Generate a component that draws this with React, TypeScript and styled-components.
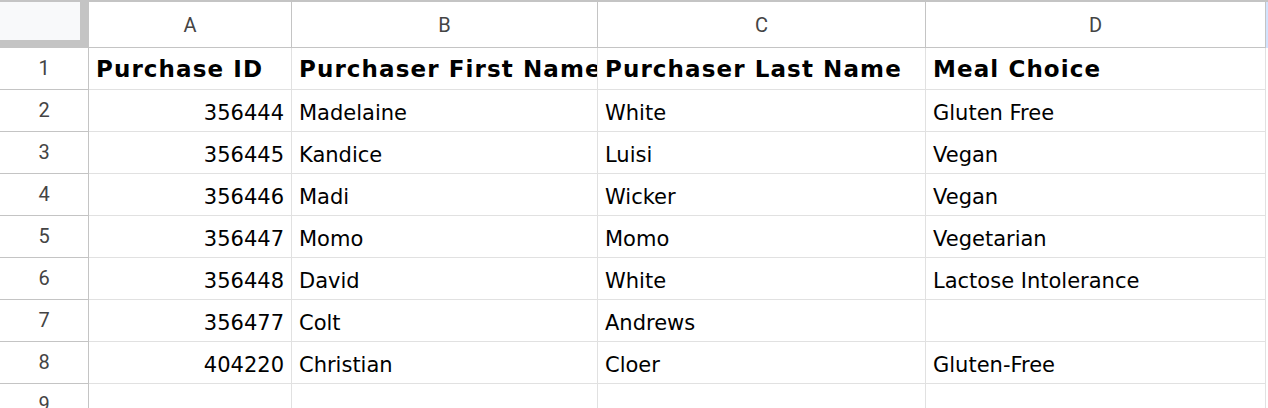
import React from "react";
import styled, { createGlobalStyle } from "styled-components";

const GlobalStyle = createGlobalStyle`
  html, body { margin: 0; padding: 0; background: #ffffff; }
  body { overflow: hidden; }
  * { box-sizing: border-box; }
`;

const HEADER_LINE = "#c4c4c4";
const GRID_LINE = "#e1e1e1";

const Sheet = styled.div`
  display: grid;
  grid-template-columns: 89px 203px 306px 328px 340px 2px;
  grid-template-rows: 48px;
  grid-auto-rows: 42px;
  width: 1268px;
  font-family: "DejaVu Sans", sans-serif;
  color: #000;
`;

const Corner = styled.div`
  background: ${HEADER_LINE};
  padding-top: 2px;
`;

const CornerFace = styled.div`
  width: 80px;
  height: 38px;
  background: #f8f9fa;
`;

const ColHeader = styled.div`
  display: flex;
  align-items: center;
  justify-content: center;
  border-top: 2px solid ${HEADER_LINE};
  border-right: 1px solid ${HEADER_LINE};
  border-bottom: 1px solid ${HEADER_LINE};
  font-family: Roboto, "Liberation Sans", sans-serif;
  font-size: 20px;
  color: #444444;
  padding-top: 1px;
`;

const EdgeHeader = styled.div`
  background: #d3e3fd;
  border-top: 2px solid ${HEADER_LINE};
`;

const RowHeader = styled.div`
  display: flex;
  align-items: center;
  justify-content: center;
  border-right: 1px solid ${HEADER_LINE};
  border-bottom: 1px solid ${HEADER_LINE};
  font-family: Roboto, "Liberation Sans", sans-serif;
  font-size: 20px;
  color: #444444;
  padding-bottom: 1px;
`;

const Cell = styled.div<{ $align?: "left" | "right"; $bold?: boolean }>`
  display: flex;
  align-items: center;
  justify-content: ${(p) => (p.$align === "right" ? "flex-end" : "flex-start")};
  padding: ${(p) => (p.$bold ? "1px" : "4px")} 7px 0 7px;
  border-right: 1px solid ${GRID_LINE};
  border-bottom: 1px solid ${GRID_LINE};
  overflow: hidden;
  white-space: nowrap;
  font-size: ${(p) => (p.$bold ? "23px" : "21px")};
  font-weight: ${(p) => (p.$bold ? 700 : 400)};
  letter-spacing: ${(p) => (p.$bold ? "1.1px" : "0")};
`;

const EdgeCell = styled.div`
  background: #ffffff;
`;

const columns = ["A", "B", "C", "D"];

const headerRow = ["Purchase ID", "Purchaser First Name", "Purchaser Last Name", "Meal Choice"];

const data: [string, string, string, string][] = [
  ["356444", "Madelaine", "White", "Gluten Free"],
  ["356445", "Kandice", "Luisi", "Vegan"],
  ["356446", "Madi", "Wicker", "Vegan"],
  ["356447", "Momo", "Momo", "Vegetarian"],
  ["356448", "David", "White", "Lactose Intolerance"],
  ["356477", "Colt", "Andrews", ""],
  ["404220", "Christian", "Cloer", "Gluten-Free"],
  ["", "", "", ""],
];

export default function App() {
  return (
    <>
      <GlobalStyle />
      <Sheet>
        <Corner>
          <CornerFace />
        </Corner>
        {columns.map((c) => (
          <ColHeader key={c}>{c}</ColHeader>
        ))}
        <EdgeHeader />

        <RowHeader>1</RowHeader>
        {headerRow.map((h) => (
          <Cell key={h} $bold>
            {h}
          </Cell>
        ))}
        <EdgeCell />

        {data.map((row, i) => (
          <React.Fragment key={i}>
            <RowHeader>{i + 2}</RowHeader>
            <Cell $align="right">{row[0]}</Cell>
            <Cell>{row[1]}</Cell>
            <Cell>{row[2]}</Cell>
            <Cell>{row[3]}</Cell>
            <EdgeCell />
          </React.Fragment>
        ))}
      </Sheet>
    </>
  );
}
